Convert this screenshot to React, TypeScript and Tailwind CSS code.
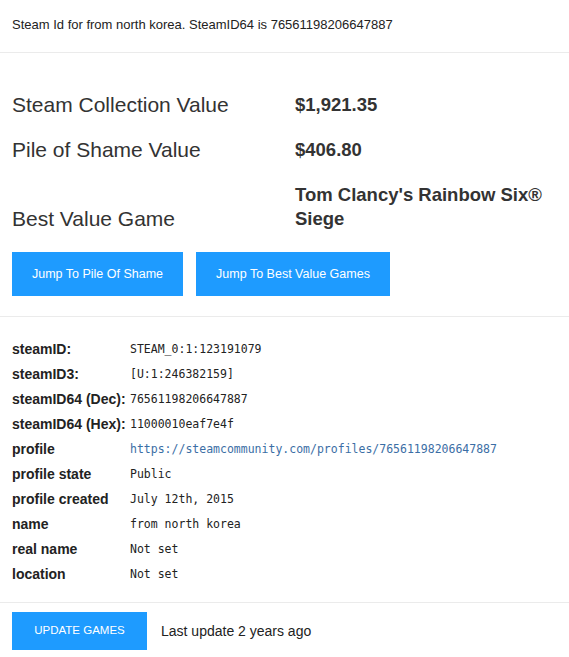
const summary = [
  { label: "Steam Collection Value", value: "$1,921.35" },
  { label: "Pile of Shame Value", value: "$406.80" },
  { label: "Best Value Game", value: "Tom Clancy's Rainbow Six® Siege" },
];

const details: { label: string; value: string; link?: boolean }[] = [
  { label: "steamID:", value: "STEAM_0:1:123191079" },
  { label: "steamID3:", value: "[U:1:246382159]" },
  { label: "steamID64 (Dec):", value: "76561198206647887" },
  { label: "steamID64 (Hex):", value: "11000010eaf7e4f" },
  { label: "profile", value: "https://steamcommunity.com/profiles/76561198206647887", link: true },
  { label: "profile state", value: "Public" },
  { label: "profile created", value: "July 12th, 2015" },
  { label: "name", value: "from north korea" },
  { label: "real name", value: "Not set" },
  { label: "location", value: "Not set" },
];

export default function App() {
  return (
    <div className="w-[569px] min-h-[657px] bg-white text-[#222] font-['Liberation_Sans',Arial,sans-serif]">
      <header className="px-3 pt-[15px] pb-[17px] text-[13px] leading-[20px] border-b border-[#ebebeb]">
        Steam Id for from north korea. SteamID64 is 76561198206647887
      </header>

      <section className="px-3 pt-[40px] pb-[20px] border-b border-[#ebebeb]">
        <div className="flex flex-col gap-[21px]">
          {summary.map((row) => (
            <div key={row.label} className="flex items-end">
              <span className="w-[283px] shrink-0 text-[21px] leading-[24px] text-[#333]">{row.label}</span>
              <span className="w-[255px] text-[18.5px] leading-[24px] font-bold text-[#333]">{row.value}</span>
            </div>
          ))}
        </div>
        <div className="flex gap-[13px] mt-[21px]">
          <button className="w-[171px] h-[44px] bg-[#1e9bff] text-white text-[12.5px]">Jump To Pile Of Shame</button>
          <button className="w-[194px] h-[44px] bg-[#1e9bff] text-white text-[12.5px]">Jump To Best Value Games</button>
        </div>
      </section>

      <section className="px-3 pt-[20px] pb-[15px] border-b border-[#ebebeb]">
        {details.map((row) => (
          <div key={row.label} className="flex items-center h-[25px]">
            <span className="w-[118px] shrink-0 text-[14px] font-bold">{row.label}</span>
            <span
              className={`font-['DejaVu_Sans_Mono',monospace] text-[11.5px] ${row.link ? "text-[#3b6ea5]" : "text-[#222]"}`}
            >
              {row.value}
            </span>
          </div>
        ))}
      </section>

      <footer className="px-3 pt-[9px] flex items-center gap-[14px]">
        <button className="w-[135px] h-[38px] bg-[#1e9bff] text-white text-[11.5px] uppercase">Update games</button>
        <span className="text-[14px] text-[#222]">Last update 2 years ago</span>
      </footer>
    </div>
  );
}
